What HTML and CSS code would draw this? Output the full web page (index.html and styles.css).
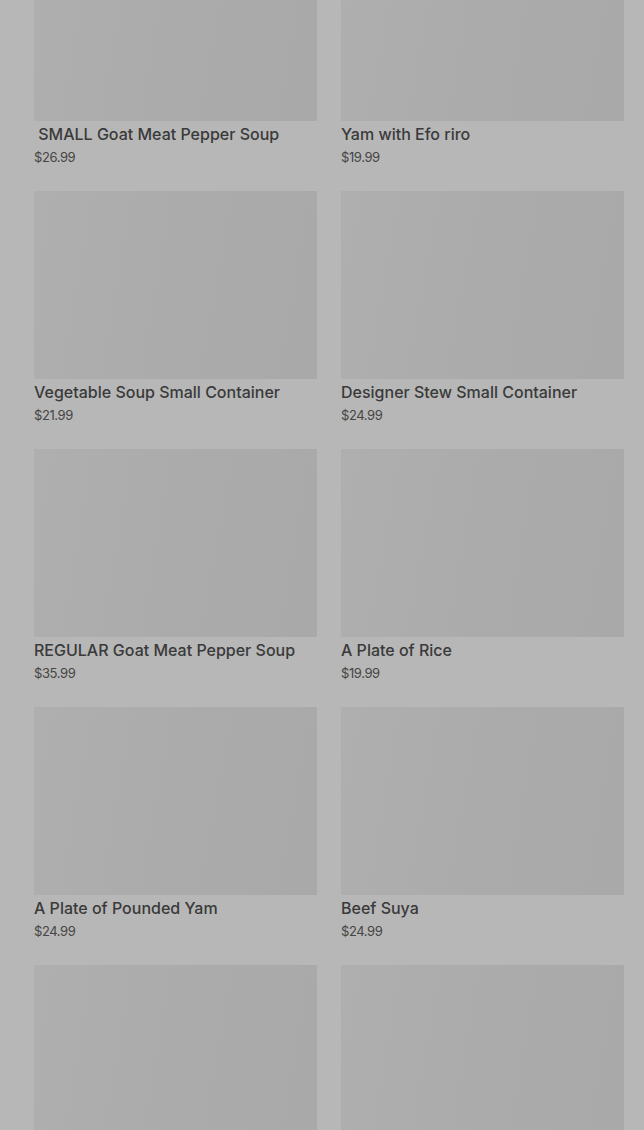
FILE: index.html
```html
<!DOCTYPE html>
<html lang="en">
<head>
<meta charset="utf-8">
<title>Menu</title>
<link rel="stylesheet" href="styles.css">
</head>
<body>
<main class="grid">
  <article class="card"><div class="thumb"></div><h3 class="title">&nbsp;SMALL Goat Meat Pepper Soup</h3><p class="price">$26.99</p></article>
  <article class="card"><div class="thumb"></div><h3 class="title">Yam with Efo riro</h3><p class="price">$19.99</p></article>
  <article class="card"><div class="thumb"></div><h3 class="title">Vegetable Soup Small Container</h3><p class="price">$21.99</p></article>
  <article class="card"><div class="thumb"></div><h3 class="title">Designer Stew Small Container</h3><p class="price">$24.99</p></article>
  <article class="card"><div class="thumb"></div><h3 class="title">REGULAR Goat Meat Pepper Soup</h3><p class="price">$35.99</p></article>
  <article class="card"><div class="thumb"></div><h3 class="title">A Plate of Rice</h3><p class="price">$19.99</p></article>
  <article class="card"><div class="thumb"></div><h3 class="title">A Plate of Pounded Yam</h3><p class="price">$24.99</p></article>
  <article class="card"><div class="thumb"></div><h3 class="title">Beef Suya</h3><p class="price">$24.99</p></article>
  <article class="card"><div class="thumb"></div></article>
  <article class="card"><div class="thumb"></div></article>
</main>
</body>
</html>
```

FILE: styles.css
```css
html, body {
  margin: 0;
  padding: 0;
  background: #b7b7b7;
  overflow: hidden;
  height: 1130px;
}
body {
  font-family: Inter, "Liberation Sans", sans-serif;
  color: #3b3b3b;
}
.grid {
  display: grid;
  grid-template-columns: 283px 283px;
  column-gap: 24px;
  padding: 0 20px 0 34px;
  margin-top: -67px;
}
.card {
  display: flex;
  flex-direction: column;
  padding-bottom: 25px;
}
.thumb {
  height: 188px;
  background: linear-gradient(100deg, #afafaf 0%, #ababab 50%, #a9a9a9 100%);
}
.title {
  margin: 3px 0 0;
  font-size: 16px;
  line-height: 20px;
  font-weight: 500;
  color: #3a3a3a;
  white-space: nowrap;
}
.price {
  margin: 4px 0 0;
  font-size: 13px;
  line-height: 18px;
  color: #454545;
  letter-spacing: -0.4px;
}
```
